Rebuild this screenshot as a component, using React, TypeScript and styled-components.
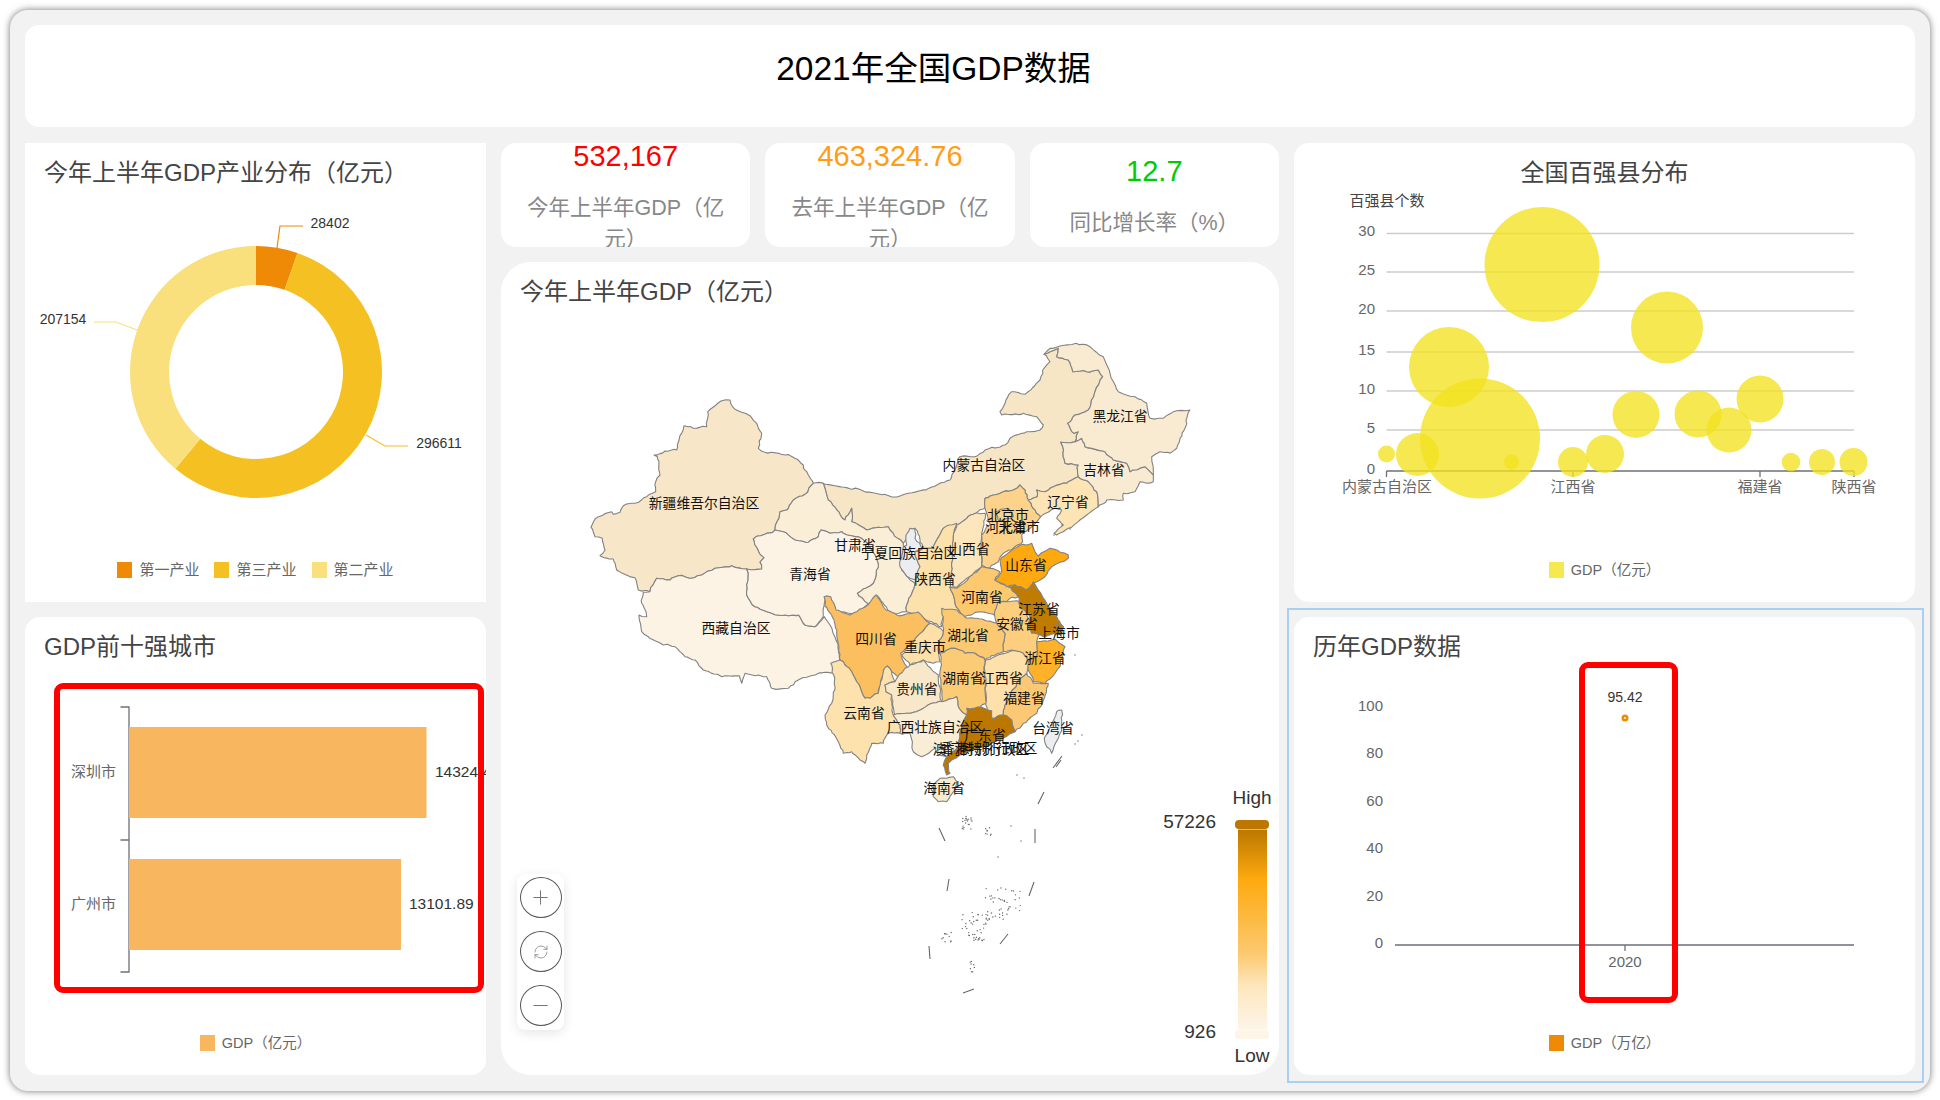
import React from "react";
import styled, { createGlobalStyle } from "styled-components";
import { Plus, Minus, RefreshCw } from "lucide-react";

const FONT = `"Liberation Sans", "Noto Sans CJK SC", sans-serif`;

const Global = createGlobalStyle`
  html, body { margin: 0; padding: 0; background: #fff; width: 1940px; height: 1100px; overflow: hidden; }
  body { font-family: ${FONT}; }
  svg text { font-family: ${FONT}; }
`;

const Frame = styled.div`
  position: relative; box-sizing: border-box; margin: 10px 0 0 10px; width: 1920px; height: 1081px;
  padding: 15px 15px 16px; background: #f2f2f2; border-radius: 18px;
  box-shadow: 0 0 7px rgba(0, 0, 0, 0.55);
  display: flex; flex-direction: column; gap: 16px;
`;
const Header = styled.header`
  height: 102px; flex: none; background: #fff; border-radius: 14px; box-sizing: border-box; padding: 23px 73px 0 0;
  text-align: center; font-size: 33.5px; line-height: 42px; color: #000;
`;
const Board = styled.div`
  display: grid; grid-template-columns: 461px 778px 621px; gap: 15px; height: 932px;
`;
const Column = styled.div`display: flex; flex-direction: column; gap: 15px; min-width: 0;`;
const Panel = styled.section<{ $r?: number; $h: number; $selected?: boolean }>`
  position: relative; display: flex; flex-direction: column; flex: none; box-sizing: border-box;
  height: ${(p) => p.$h}px; background: #fff; border-radius: ${(p) => p.$r ?? 15}px;
  ${(p) => p.$selected && `&::before { content: ""; position: absolute; left: -7px; right: -9px; top: -9px; bottom: -8px; border: 2px solid #a9cff3; pointer-events: none; }`}
`;
const Title = styled.h2<{ $center?: boolean }>`
  flex: none; margin: 0; height: 46px; box-sizing: border-box; padding: 13px 0 0 ${(p) => (p.$center ? 0 : 19)}px;
  font-size: 24px; font-weight: 400; line-height: 33px; color: #444; white-space: nowrap;
  text-align: ${(p) => (p.$center ? "center" : "left")};
`;
const Chart = styled.svg`flex: 1; min-height: 0; width: 100%; display: block;`;
const LegendRow = styled.div`
  flex: none; display: flex; justify-content: center; gap: 15px; height: 16px; margin-bottom: 24px;
`;
const LegendItem = styled.div<{ $size?: number }>`
  display: flex; align-items: center; gap: 7px; font-size: ${(p) => p.$size ?? 15}px; line-height: 16px; color: #666; white-space: nowrap;
`;
const Swatch = styled.i<{ $c: string }>`display: block; width: 15px; height: 16px; background: ${(p) => p.$c};`;
const StatRow = styled.div`display: grid; grid-template-columns: repeat(3, 1fr); gap: 15px; height: 104px; flex: none;`;
const Stat = styled.div`
  box-sizing: border-box; background: #fff; border-radius: 15px; overflow: hidden; padding: 0 14px;
  display: flex; flex-direction: column; justify-content: center; align-items: stretch; text-align: center;
`;
const StatValue = styled.div<{ $c: string }>`
  flex: none; height: 41px; line-height: 41px; font-size: 29px; color: ${(p) => p.$c}; margin-bottom: 16px;
`;
const StatLabel = styled.div`flex: none; font-size: 21.5px; line-height: 31px; color: #888;`;
const ZoomBox = styled.div`
  position: absolute; left: 16px; top: 612px; width: 47px; height: 156px; box-sizing: border-box; padding: 3px 0;
  background: #fff; border-radius: 8px; box-shadow: 0 3px 12px rgba(0, 0, 0, 0.1);
  display: flex; flex-direction: column; align-items: center; gap: 13px;
`;
const ZoomButton = styled.button`
  width: 42px; height: 41px; flex: none; padding: 0; border: 1px solid #555; border-radius: 50%; background: #fff; color: #707070;
  display: flex; align-items: center; justify-content: center;
`;
const Highlight = styled.div<{ $l: number; $t: number; $w: number; $h: number }>`
  position: absolute; left: ${(p) => p.$l}px; top: ${(p) => p.$t}px; width: ${(p) => p.$w}px; height: ${(p) => p.$h}px;
  box-sizing: border-box; border: 6px solid #ff0000; border-radius: 9px; pointer-events: none;
`;
const Label = styled.text<{ $size?: number; $c?: string; $anchor?: string }>`
  font-size: ${(p) => p.$size ?? 15}px; fill: ${(p) => p.$c ?? "#666"}; text-anchor: ${(p) => p.$anchor ?? "middle"};
  dominant-baseline: central; transform: translateY(-1px);
`;
const MapLabel = styled.text`
  font-size: 13.8px; fill: #111; text-anchor: middle; dominant-baseline: central;
`;

const hash = (x: number, y: number) => {
  const v = Math.sin(x * 12.9898 + y * 78.233) * 43758.5453;
  return v - Math.floor(v);
};
const roughen = (pts: number[][]) => {
  const out: number[][] = [];
  const edge = (a: number[], b: number[]) => {
    const dx = b[0] - a[0], dy = b[1] - a[1];
    if (Math.hypot(dx, dy) < 5) return;
    const mx = Math.round(((a[0] + b[0]) / 2) * 10) / 10, my = Math.round(((a[1] + b[1]) / 2) * 10) / 10;
    const m = [mx + (hash(mx, my) - 0.5) * 1.8, my + (hash(my, mx) - 0.5) * 1.8];
    edge(a, m);
    out.push(m);
    edge(m, b);
  };
  pts.forEach((p, i) => {
    out.push(p);
    edge(p, pts[(i + 1) % pts.length]);
  });
  return out;
};
const at = (x0: number, y0: number, s: string) =>
  s.trim().split(/\s+/).map((p) => {
    const [x, y] = p.split(",").map(Number);
    return [x0 + x / 3, y0 + y / 3];
  });
const A = (s: string) => at(585, 395, s);
const B = (s: string) => at(950, 335, s);
const C = (s: string) => at(800, 480, s);
const D = (s: string) => at(810, 600, s);

const provinces: [string, number[][]][] = [
  ["#f7e6c8", A("408,18 435,15 445,38 470,52 495,62 515,85 530,115 520,160 540,172 600,180 630,190 655,210 670,240 685,265 660,298 625,315 605,345 585,350 570,405 505,432 518,462 537,488 525,502 530,522 485,522 440,512 390,520 350,540 320,550 280,542 255,555 215,550 195,590 160,585 150,548 95,525 85,492 45,482 60,465 52,430 30,425 18,397 30,372 55,360 80,350 85,358 105,352 115,332 150,325 185,305 212,290 212,260 225,240 217,185 207,180 240,168 275,165 282,135 297,92 325,100 365,95 368,50")],
  ["#fcf3e4", A("195,590 215,550 255,555 280,542 320,550 350,540 390,520 440,512 485,522 490,535 485,570 490,610 510,635 560,655 610,662 640,660 660,690 690,695 718,665 735,690 755,740 765,800 750,835 720,832 690,840 640,855 610,880 560,880 545,845 520,840 480,835 470,865 463,842 410,845 355,825 330,795 300,785 270,755 235,750 190,725 170,710 162,660 185,665 178,640 170,625 175,592")],
  ["#f7e6c5", [...B("282,58 300,50 325,40 320,65 355,75 368,110 410,110 445,105 458,125 435,170 415,225 375,240 353,265 372,295 385,290 375,320 332,322 345,385 385,390 385,425 350,445 310,455 285,470 260,465 262,485 235,495 225,465 210,450 190,465 160,470 130,480 105,490 105,520"), ...C("530,98 470,135 430,145 400,205 370,205 345,145 325,155 310,190 270,150 265,140 200,150 155,125 155,85 135,120 85,60 70,10 63,9 291,51 378,30 450,0"), ...B("30,365 75,365 105,345 165,330 180,310 215,295 270,285 280,270 260,245 220,235 155,240 150,230 165,205 185,170 225,178 270,135 282,100 300,80")]],
  ["#fbeed6", [...A("685,265 660,298 625,315 605,345 585,350 570,405 595,410 630,435 670,442 700,425 708,405 735,415 770,410"), ...C("130,160 183,174 225,225 235,262 220,310 172,340 205,372 162,405 190,420 230,345 275,405 320,395 320,375 345,310 330,300 305,270 310,190 270,150 265,140 200,150 155,125 155,85 135,120 85,60 70,10")]],
  ["#fcf3e4", [...A("505,432 570,405 595,410 630,435 670,442 700,425 708,405 735,415 770,410"), ...C("130,160 183,174 225,225 235,262 220,310 172,340 205,372 162,405 130,395 105,400 75,350"), ...A("718,625 715,665 690,695 660,690 640,660 610,662 560,655 510,635 490,610 485,570 490,535 485,522 530,522 525,502 537,488 518,462")]],
  ["#ecedf0", C("345,145 330,145 318,165 320,195 310,200 300,260 330,295 345,300 360,260 345,215 368,205 345,175")],
  ["#fde1ab", C("400,205 430,145 470,130 460,170 455,260 450,322 465,370 490,410 430,410 425,440 395,425 345,400 320,395 320,375 345,310 360,260 345,215 370,205")],
  ["#fde6bc", C("470,135 530,98 555,100 545,170 545,260 470,322 450,322 455,260 460,170")],
  ["#fdd38c", B("105,490 130,480 160,470 190,465 210,450 225,465 235,495 250,520 272,545 240,580 215,600 218,620 160,655 145,680 120,700 95,690 95,600 120,570 105,520")],
  ["#fde4b5", B("260,465 285,470 310,455 350,445 385,425 415,440 440,470 445,515 410,540 355,580 320,600 312,595 340,570 320,550 335,525 315,520 272,545 250,520 235,495 262,485")],
  ["#f9ebd1", B("332,322 375,320 395,310 405,335 465,350 490,375 530,385 540,410 585,395 610,420 610,440 590,445 570,440 555,470 520,475 520,495 470,495 445,515 440,470 415,440 385,425 385,390 345,385")],
  ["#f9ebd1", B("282,58 300,40 330,33 378,25 420,35 460,65 480,115 505,170 555,185 590,205 600,250 640,250 670,230 720,225 705,280 680,340 660,355 630,350 605,365 610,420 585,395 540,410 530,385 490,375 465,350 405,335 395,310 375,320 385,290 372,295 353,265 375,240 415,225 435,170 458,125 445,105 410,110 368,110 355,75 320,65 325,40 300,50")],
  ["#fcc96f", C("450,322 470,325 545,260 600,275 585,300 625,320 655,350 635,352 620,365 600,370 590,410 540,395 490,410 465,370")],
  ["#fea90f", C("600,240 660,195 695,190 705,215 715,228 750,205 805,225 805,235 755,260 735,290 700,310 680,330 645,315 620,320 585,300 605,275")],
  ["#fcce7e", D("565,5 630,5 650,45 690,100 680,125 680,170 655,185 640,160 605,150 580,155 585,100 560,70 555,30")],
  ["#c07c00", C("625,320 645,315 680,330 700,305 740,370 770,410 790,440 770,460 730,470 695,460 685,430 690,410 660,385 655,350")],
  ["#c07c00", C("770,430 790,440 785,465 765,465")],
  ["#fcc972", D("400,50 395,25 440,30 470,55 500,55 560,70 585,100 580,155 525,180 495,160 465,160 435,145 390,160 385,140 400,95")],
  ["#fbbf5f", D("42,-10 45,18 65,45 80,100 90,180 105,195 125,215 165,295 180,295 205,280 220,210 232,198 245,215 270,235 300,225 278,180 272,160 300,135 360,70 324,36 261,45 228,30 198,-15 165,21 120,45 78,30 62,-10")],
  ["#fde0a8", D("360,70 400,95 385,140 390,185 370,190 340,180 300,195 275,165 300,135")],
  ["#fde2ae", D("62,190 90,180 105,195 125,215 165,295 180,295 205,280 220,215 232,198 245,215 255,245 225,255 228,275 245,285 250,345 270,375 270,400 235,400 220,430 185,430 170,465 165,490 150,480 125,455 100,460 85,425 50,375 45,345 65,310 75,260")],
  ["#f8e7c8", D("225,255 255,245 285,205 340,180 385,225 390,280 395,305 365,310 330,330 290,340 255,345 245,285 228,275")],
  ["#fccb75", D("390,160 435,145 465,160 495,160 525,180 525,265 530,310 490,330 470,345 445,320 440,290 395,305 390,215")],
  ["#fde0aa", D("527,180 605,152 640,160 655,185 650,220 620,250 585,315 580,345 545,355 530,320 525,265")],
  ["#fcc873", D("650,220 670,250 715,250 700,300 680,340 640,370 615,395 605,360 580,345 585,315 620,250")],
  ["#feb129", D("680,125 735,118 765,140 750,200 735,220 705,250 670,245 655,210 655,185 680,170")],
  ["#faedd5", D("250,345 290,340 330,330 365,310 395,305 440,290 445,320 470,345 450,410 445,440 410,470 385,465 375,445 335,470 310,455 300,400 270,400 270,375")],
  ["#bb7700", D("470,345 470,325 515,322 545,332 545,355 580,345 605,360 615,395 580,415 530,440 490,450 450,465 425,480 415,490 420,520 410,525 400,495 410,470 445,440 450,410")],
  ["#f9ebd0", D("370,555 390,535 430,530 440,545 435,570 410,605 385,605 370,590")],
  ["#ecedf0", D("740,335 755,330 755,360 750,400 725,460 710,440 703,415")],
  ["#fdd38c", B("135,530 175,520 190,545 150,560")],
];

const mapLabels: [string, number, number][] = [
  ["黑龙江省", 1120, 416], ["吉林省", 1104, 470], ["辽宁省", 1068, 502], ["内蒙古自治区", 984, 465],
  ["新疆维吾尔自治区", 704, 503], ["甘肃省", 855, 545], ["宁夏回族自治区", 909, 553], ["山西省", 969, 549],
  ["北京市", 1008, 515], ["河北省", 1006, 527], ["天津市", 1019, 527], ["青海省", 810, 574], ["陕西省", 935, 579],
  ["山东省", 1026, 565], ["河南省", 982, 597], ["江苏省", 1039, 609], ["安徽省", 1017, 624], ["上海市", 1059, 633],
  ["湖北省", 968, 635], ["四川省", 876, 639], ["重庆市", 925, 647], ["西藏自治区", 736, 628], ["浙江省", 1045, 658],
  ["湖南省", 963, 678], ["江西省", 1002, 678], ["贵州省", 917, 689], ["福建省", 1024, 698], ["云南省", 864, 713],
  ["广西壮族自治区", 935, 727], ["广东省", 985, 735], ["香港特别行政区", 989, 748], ["澳门特别行政区", 981, 749],
  ["台湾省", 1053, 728], ["海南省", 944, 788],
];

const dashes: number[][] = [
  [1056, 767, 1061, 760], [1038, 804, 1044, 792], [1035, 843, 1035, 829], [939, 828, 945, 841], [949, 879, 947, 891],
  [1034, 882, 1029, 896], [1008, 934, 1000, 944], [929, 946, 930, 959], [974, 989, 963, 993], [1062, 756, 1053, 768],
];
const clusters: [number, number, number, number, number][] = [
  [962, 816, 10, 14, 20], [984, 827, 8, 9, 8], [985, 888, 36, 32, 48], [962, 912, 26, 24, 30], [941, 932, 12, 10, 10], [970, 960, 5, 13, 8], [973, 935, 12, 8, 10],
];
const dots: [number, number][] = [[1021, 841], [998, 857], [1011, 826], [978, 940]];
let seed = 17;
const rnd = () => { seed = (seed * 9301 + 49297) % 233280; return seed / 233280; };
clusters.forEach(([x, y, w, h, n]) => { for (let i = 0; i < n; i++) dots.push([x + rnd() * w, y + rnd() * h]); });
[[1078, 741], [1075, 744], [1082, 735], [1017, 775], [1024, 778], [1000, 740], [1004, 748], [1075, 655], [1062, 525], [1070, 529], [1054, 535]].forEach((d) => dots.push(d as [number, number]));

const polar = (r: number, deg: number) => {
  const a = ((deg - 90) * Math.PI) / 180;
  return [256 + r * Math.cos(a), 372 + r * Math.sin(a)];
};
const ring = (from: number, to: number) => {
  const [a, b] = polar(126, from), [c, d] = polar(126, to), [e, f] = polar(87, to), [g, h] = polar(87, from);
  const big = to - from > 180 ? 1 : 0;
  return `M${a} ${b}A126 126 0 ${big} 1 ${c} ${d}L${e} ${f}A87 87 0 ${big} 0 ${g} ${h}Z`;
};

const bubbles = [[1386.5, 454, 8.5], [1417.5, 454.5, 21.5], [1449, 367, 40], [1480, 438.5, 60], [1511.5, 462, 7.5], [1542, 264.6, 57.5], [1573, 462, 15], [1605, 454, 19], [1636, 414.4, 23.5], [1667, 327.6, 36], [1698, 414, 23.5], [1729, 430, 22.5], [1760, 399, 23.5], [1791, 462, 9.3], [1822, 462, 13], [1853.5, 462, 14]];
const gridYs: [string, number][] = [["30", 233.5], ["25", 272], ["20", 311], ["15", 352], ["10", 391], ["5", 430]];
const lineYs: [string, number][] = [["100", 706], ["80", 753], ["60", 801], ["40", 848], ["20", 896], ["0", 943]];

export default function App() {
  return (
    <>
      <Global />
      <Frame>
        <Header>2021年全国GDP数据</Header>
        <Board>
          <Column>
            <Panel $h={459} $r={0}>
              <Title>今年上半年GDP产业分布（亿元）</Title>
              <Chart viewBox="25 189 461 373">
                <path d={ring(0, 19.2)} fill="#ef8a06" />
                <path d={ring(19.2, 219.8)} fill="#f4c022" />
                <path d={ring(219.8, 360)} fill="#f9e07d" />
                <polyline points="277,248 280,226 303,226" fill="none" stroke="#ef8a06" strokeWidth="1.2" />
                <polyline points="366,435 385,446 408,446" fill="none" stroke="#f4c022" strokeWidth="1.2" />
                <polyline points="137,330 116,322 94,322" fill="none" stroke="#f9e07d" strokeWidth="1.2" />
                <Label x={330} y={224} $size={14} $c="#333">28402</Label>
                <Label x={439} y={444} $size={14} $c="#333">296611</Label>
                <Label x={63} y={320} $size={14} $c="#333">207154</Label>
              </Chart>
              <LegendRow>
                <LegendItem><Swatch $c="#ef8a06" />第一产业</LegendItem>
                <LegendItem><Swatch $c="#f4c022" />第三产业</LegendItem>
                <LegendItem><Swatch $c="#f9e07d" />第二产业</LegendItem>
              </LegendRow>
            </Panel>
            <Panel $h={458}>
              <Title>GDP前十强城市</Title>
              <Chart viewBox="25 663 461 372">
                <path d="M120.5 707H129V972H120.5M120.5 840H129" fill="none" stroke="#6e7079" strokeWidth="1.3" />
                <rect x={129} y={727} width={297.5} height={91} fill="#f8b75e" />
                <rect x={129} y={859} width={272} height={91} fill="#f8b75e" />
                <Label x={116} y={772} $anchor="end">深圳市</Label>
                <Label x={116} y={904} $anchor="end">广州市</Label>
                <Label x={435} y={772} $anchor="start" $c="#333" $size={15.5}>14324.47</Label>
                <Label x={409} y={904} $anchor="start" $c="#333" $size={15.5}>13101.89</Label>
              </Chart>
              <LegendRow><LegendItem $size={14.5}><Swatch $c="#f8b75e" />GDP（亿元）</LegendItem></LegendRow>
              <Highlight $l={29} $t={66} $w={430} $h={310} />
            </Panel>
          </Column>
          <Column>
            <StatRow>
              <Stat><StatValue $c="#ff0000">532,167</StatValue><StatLabel>今年上半年GDP（亿元）</StatLabel></Stat>
              <Stat><StatValue $c="#ff9d14">463,324.76</StatValue><StatLabel>去年上半年GDP（亿元）</StatLabel></Stat>
              <Stat><StatValue $c="#00cc00">12.7</StatValue><StatLabel>同比增长率（%）</StatLabel></Stat>
            </StatRow>
            <Panel $h={813} $r={30}>
              <Title>今年上半年GDP（亿元）</Title>
              <Chart viewBox="501 308 778 767">
                <defs>
                  <linearGradient id="vm" x1="0" y1="0" x2="0" y2="1">
                    <stop offset="0" stopColor="#bb7700" />
                    <stop offset="0.25" stopColor="#fea90f" />
                    <stop offset="0.62" stopColor="#fcc96f" />
                    <stop offset="0.78" stopColor="#fde6bc" />
                    <stop offset="1" stopColor="#fdf5e8" />
                  </linearGradient>
                </defs>
                {provinces.map(([fill, pts], i) => (
                  <polygon key={i} points={roughen(pts).map((p) => `${p[0].toFixed(1)},${p[1].toFixed(1)}`).join(" ")} fill={fill} stroke="#828282" strokeWidth="1.1" strokeLinejoin="round" />
                ))}
                {dashes.map((d, i) => <line key={i} x1={d[0]} y1={d[1]} x2={d[2]} y2={d[3]} stroke="#666" strokeWidth="1.1" />)}
                {dots.map((d, i) => <circle key={i} cx={d[0]} cy={d[1]} r={0.7} fill="#666" />)}
                {mapLabels.map(([t, x, y]) => <MapLabel key={t} x={x} y={y}>{t}</MapLabel>)}
                <rect x={1235} y={820} width={34} height={9} rx={4} fill="#bb7700" />
                <rect x={1238} y={829.5} width={29} height={200} fill="url(#vm)" />
                <rect x={1235} y={1030} width={34} height={9} rx={4} fill="#fdf5e8" />
                <Label x={1252} y={798} $size={19} $c="#333">High</Label>
                <Label x={1252} y={1056} $size={19} $c="#333">Low</Label>
                <Label x={1216} y={822} $size={19} $c="#333" $anchor="end">57226</Label>
                <Label x={1216} y={1032} $size={19} $c="#333" $anchor="end">926</Label>
              </Chart>
              <ZoomBox>
                <ZoomButton aria-label="放大"><Plus size={23} strokeWidth={1} /></ZoomButton>
                <ZoomButton aria-label="还原"><RefreshCw size={16} strokeWidth={1} /></ZoomButton>
                <ZoomButton aria-label="缩小"><Minus size={23} strokeWidth={1} /></ZoomButton>
              </ZoomBox>
            </Panel>
          </Column>
          <Column>
            <Panel $h={459}>
              <Title $center>全国百强县分布</Title>
              <Chart viewBox="1294 189 621 373">
                {gridYs.map(([t, y]) => (
                  <g key={t}>
                    <line x1={1386.5} x2={1854} y1={y} y2={y} stroke="#ccc" strokeWidth="1.3" />
                    <Label x={1375} y={y - 2} $anchor="end">{t}</Label>
                  </g>
                ))}
                <Label x={1375} y={469} $anchor="end">0</Label>
                <Label x={1387} y={201.5} $size={15} $c="#444">百强县个数</Label>
                <path d="M1386.5 471H1854M1386.5 471V477M1573 471V477M1760 471V477M1854 471V477" stroke="#6e7079" strokeWidth="1.3" fill="none" />
                {bubbles.map(([x, y, r], i) => <circle key={i} cx={x} cy={y} r={r} fill="#f2e21f" fillOpacity={0.78} />)}
                <Label x={1387} y={487.5} $size={15}>内蒙古自治区</Label>
                <Label x={1573} y={487.5} $size={15}>江西省</Label>
                <Label x={1760} y={487.5} $size={15}>福建省</Label>
                <Label x={1854} y={487.5} $size={15}>陕西省</Label>
              </Chart>
              <LegendRow><LegendItem $size={14.5}><Swatch $c="#f5e94f" />GDP（亿元）</LegendItem></LegendRow>
            </Panel>
            <Panel $h={458} $selected>
              <Title>历年GDP数据</Title>
              <Chart viewBox="1294 663 621 372">
                {lineYs.map(([t, y]) => <Label key={t} x={1383} y={y} $anchor="end">{t}</Label>)}
                <path d="M1395 945H1854M1625 945V951" stroke="#6e7079" strokeWidth="1.3" fill="none" />
                <Label x={1625} y={962}>2020</Label>
                <Label x={1625} y={698} $size={14} $c="#333">95.42</Label>
                <circle cx={1625} cy={718} r={2.2} fill="#fff" stroke="#ef8a06" strokeWidth="2.6" />
              </Chart>
              <LegendRow><LegendItem $size={14.5}><Swatch $c="#ef8a06" />GDP（万亿）</LegendItem></LegendRow>
              <Highlight $l={285} $t={45} $w={99} $h={341} />
            </Panel>
          </Column>
        </Board>
      </Frame>
    </>
  );
}
